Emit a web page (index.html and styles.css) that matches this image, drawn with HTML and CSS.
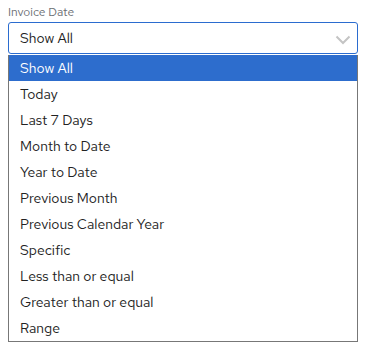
FILE: index.html
```html
<!DOCTYPE html>
<html>
<head>
<meta charset="utf-8">
<link rel="stylesheet" href="styles.css">
</head>
<body>
<div class="field">
  <label class="label">Invoice Date</label>
  <div class="select">
    <span class="value">Show All</span>
    <svg class="chevron" width="16" height="10" viewBox="0 0 16 10"><path d="M1.5 1.5 L8 8 L14.5 1.5" fill="none" stroke="#c4c4c4" stroke-width="2"/></svg>
  </div>
  <ul class="list">
    <li class="item selected">Show All</li>
    <li class="item">Today</li>
    <li class="item">Last 7 Days</li>
    <li class="item">Month to Date</li>
    <li class="item">Year to Date</li>
    <li class="item">Previous Month</li>
    <li class="item">Previous Calendar Year</li>
    <li class="item">Specific</li>
    <li class="item">Less than or equal</li>
    <li class="item">Greater than or equal</li>
    <li class="item">Range</li>
  </ul>
</div>
</body>
</html>
```
FILE: styles.css
```css
html, body { margin: 0; padding: 0; background: #fff; }
body {
  font-family: "Red Hat Text", Lato, "Open Sans", sans-serif;
  color: #151515;
  padding: 4px 8px 0 8px;
  width: 350px;
}
.field { display: flex; flex-direction: column; }
.label {
  font-size: 12px;
  color: #6a6e73;
  height: 18px;
  line-height: 16px;
}
.select {
  box-sizing: border-box;
  height: 32px;
  border: 1px solid #2b6ccf;
  border-radius: 3px;
  display: flex;
  align-items: center;
  justify-content: space-between;
  padding: 0 6px 0 11px;
  font-size: 14px;
}
.value { color: #222; }
.chevron { margin-top: 4px; }
.list {
  list-style: none;
  margin: 0;
  padding: 0;
  border: 1px solid #777;
  border-top: none;
  margin-top: 1px;
}
.item {
  height: 26px;
  line-height: 26px;
  padding-left: 11px;
  font-size: 14px;
  color: #222;
}
.item.selected { background: #2d6dcd; color: #fff; }
```
